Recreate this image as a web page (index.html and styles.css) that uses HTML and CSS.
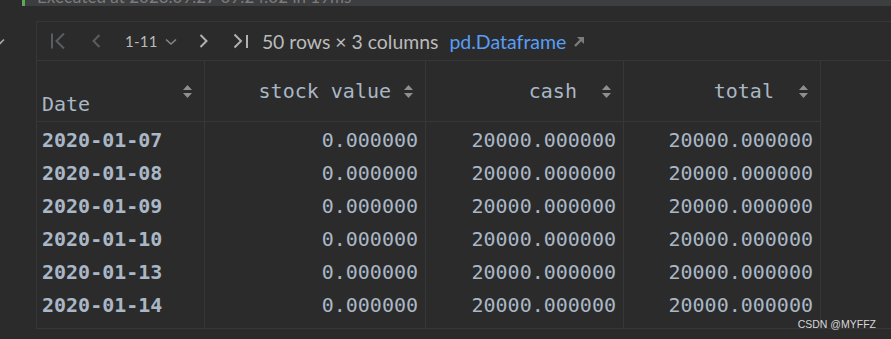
FILE: index.html
```html
<!DOCTYPE html>
<html lang="en">
<head>
<meta charset="UTF-8">
<title>DataFrame output</title>
<link rel="stylesheet" href="styles.css">
</head>
<body>

<div class="exec">
    <span class="exec-text">Executed at 2023.09.27 09:24:02 in 19ms</span>
</div>

<div class="main">
    <div class="gutter">
        <svg class="fold" width="10" height="8" viewBox="0 0 10 8"><polyline points="1,1.5 5,5.5 9,1.5" fill="none" stroke="#a6a6a6" stroke-width="1.6"/></svg>
    </div>

    <div class="panel">
        <div class="toolbar">
            <svg class="nav nav-first" width="16" height="16" viewBox="0 0 16 16"><line x1="2" y1="0.5" x2="2" y2="15.5" stroke="#5b5d5f" stroke-width="2"/><polyline points="14,0.5 6.5,8 14,15.5" fill="none" stroke="#5b5d5f" stroke-width="2"/></svg>
            <svg class="nav nav-prev" width="10" height="14" viewBox="0 0 10 14"><polyline points="8.5,1 2.5,7 8.5,13" fill="none" stroke="#5b5d5f" stroke-width="2"/></svg>
            <span class="range">1-11</span>
            <svg class="range-drop" width="12" height="8" viewBox="0 0 12 8"><polyline points="1,1.5 6,6 11,1.5" fill="none" stroke="#868686" stroke-width="1.6"/></svg>
            <svg class="nav nav-next" width="10" height="14" viewBox="0 0 10 14"><polyline points="1.5,1 7.5,7 1.5,13" fill="none" stroke="#afb1b3" stroke-width="2"/></svg>
            <svg class="nav nav-last" width="16" height="16" viewBox="0 0 16 16"><polyline points="1.5,1.5 8,8 1.5,14.5" fill="none" stroke="#afb1b3" stroke-width="2"/><line x1="14" y1="2" x2="14" y2="15" stroke="#afb1b3" stroke-width="2"/></svg>
            <span class="summary">50 rows × 3 columns</span>
            <span class="frame-link">pd.Dataframe</span>
            <svg class="open-icon" width="10" height="10" viewBox="0 0 10 10"><polygon points="3,0 10,0 10,7" fill="#7b7b7b"/><line x1="1" y1="9" x2="7" y2="3" stroke="#7b7b7b" stroke-width="2.4"/></svg>
        </div>

        <table class="frame">
            <thead>
                <tr>
                    <th class="col-date"><div class="head"><span class="index-name">Date</span><svg class="sort" width="9" height="13" viewBox="0 0 9 13"><polygon points="0,5 4.5,0 9,5" fill="#8f8f8f"/><polygon points="0,8 4.5,13 9,8" fill="#8f8f8f"/></svg></div></th>
                    <th class="col-stock"><div class="head"><span>stock value</span><svg class="sort" width="9" height="13" viewBox="0 0 9 13"><polygon points="0,5 4.5,0 9,5" fill="#8f8f8f"/><polygon points="0,8 4.5,13 9,8" fill="#8f8f8f"/></svg></div></th>
                    <th class="col-cash"><div class="head"><span>cash </span><svg class="sort" width="9" height="13" viewBox="0 0 9 13"><polygon points="0,5 4.5,0 9,5" fill="#8f8f8f"/><polygon points="0,8 4.5,13 9,8" fill="#8f8f8f"/></svg></div></th>
                    <th class="col-total"><div class="head"><span>total </span><svg class="sort" width="9" height="13" viewBox="0 0 9 13"><polygon points="0,5 4.5,0 9,5" fill="#8f8f8f"/><polygon points="0,8 4.5,13 9,8" fill="#8f8f8f"/></svg></div></th>
                </tr>
            </thead>
            <tbody id="rows"></tbody>
        </table>
    </div>
</div>

<div class="mark">CSDN @MYFFZ</div>

<script>
var dates = ['2020-01-07', '2020-01-08', '2020-01-09', '2020-01-10', '2020-01-13', '2020-01-14'];
var body = document.getElementById('rows');

dates.forEach(function (d) {
    var tr = document.createElement('tr');
    tr.innerHTML = '<td class="idx">' + d + '</td>' +
        '<td class="num">0.000000</td>' +
        '<td class="num">20000.000000</td>' +
        '<td class="num">20000.000000</td>';
    body.appendChild(tr);
});
</script>

</body>
</html>
```

FILE: styles.css
```css
/* Notebook output cell, dark theme */
body {
    margin: 0;
    background-color: #2b2b2b;
    font-family: Lato, "Noto Sans", sans-serif;
    overflow: hidden;
}

.exec {
    margin-left: 22px;
    height: 6px;
    border-left: 3px solid #5aa85a;
    background-color: #3c3e40;
    overflow: hidden;
}

.exec-text {
    display: block;
    margin-top: -12px;
    padding-left: 12px;
    font-size: 17px;
    line-height: 17px;
    color: #7c7c7c;
    white-space: nowrap;
}

.main {
    display: flex;
    margin-top: 15px;
}

.gutter {
    width: 36px;
    flex: none;
    padding-top: 17px;
}

.fold {
    display: block;
    margin-left: -5px;
}

.panel {
    flex: 1;
    border-top: 1px solid #373737;
    border-left: 1px solid #373737;
    border-bottom: 1px solid #373737;
}

/* Toolbar */
.toolbar {
    display: flex;
    align-items: center;
    height: 38px;
    border-bottom: 1px solid #373737;
}

.nav {
    display: block;
    flex: none;
}

.nav-first {
    margin-left: 13px;
}

.nav-prev {
    margin-left: 25px;
}

.range {
    margin-left: 24px;
    font-size: 15px;
    color: #bbbbbb;
    letter-spacing: 0.3px;
}

.range-drop {
    margin-left: 7px;
    margin-top: 2px;
}

.nav-next {
    margin-left: 22px;
}

.nav-last {
    margin-left: 24px;
}

.summary {
    margin-left: 13px;
    font-size: 19.4px;
    color: #bbbbbb;
    white-space: nowrap;
}

.frame-link {
    margin-left: 11px;
    font-size: 19.5px;
    color: #589df6;
}

.open-icon {
    margin-left: 8px;
    margin-top: 2px;
}

/* Data table */
.frame {
    width: 784px;
    table-layout: fixed;
    border-collapse: separate;
    border-spacing: 0;
    font-family: "DejaVu Sans Mono", monospace;
    font-size: 20px;
    color: #a9b7c6;
}

.frame th,
.frame td {
    box-sizing: border-box;
    border-right: 1px solid #373737;
    white-space: pre;
}

.frame th {
    height: 61px;
    padding: 0 12px 0 5px;
    border-bottom: 1px solid #373737;
    font-weight: normal;
}

.col-date { width: 168px; }
.col-stock { width: 221px; }
.col-cash { width: 198px; }
.col-total { width: 197px; }

.head {
    display: flex;
    align-items: center;
    justify-content: flex-end;
    gap: 13px;
    height: 60px;
}

.index-name {
    align-self: flex-end;
    margin-right: auto;
    margin-bottom: 5px;
}

.sort {
    display: block;
    flex: none;
}

.frame td {
    height: 33px;
    padding: 2px 7px 0 5px;
    line-height: 20px;
}

.frame tr:last-child td {
    height: 41px;
    padding-bottom: 8px;
}

.idx {
    font-weight: bold;
}

.num {
    text-align: right;
}

.mark {
    position: absolute;
    right: 15px;
    top: 318px;
    font-family: "Liberation Sans", Arial, sans-serif;
    font-size: 10.5px;
    color: #d8d8d8;
}
```
